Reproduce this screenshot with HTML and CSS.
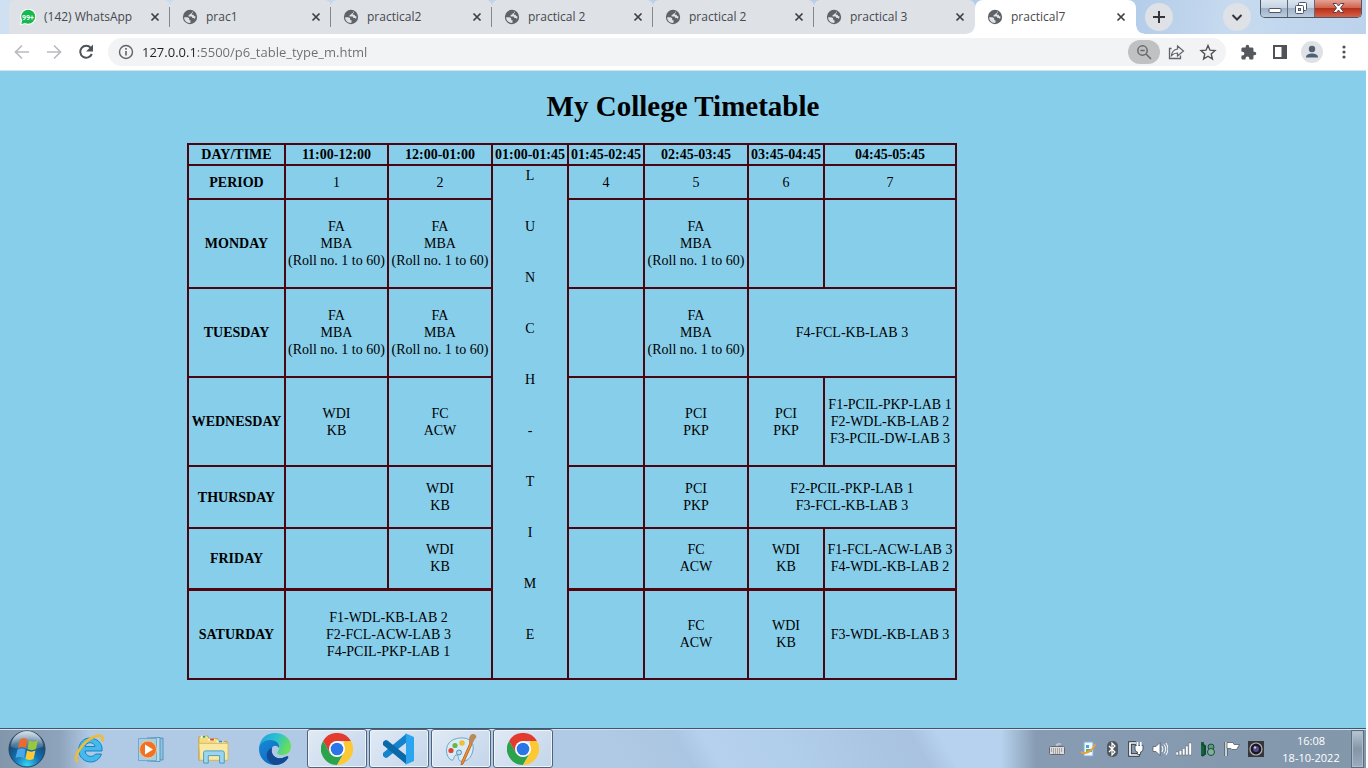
FILE: index.html
```html
<!DOCTYPE html>
<html lang="en">
<head>
<meta charset="utf-8">
<title>practical7</title>
<link rel="stylesheet" href="styles.css">
</head>
<body>
<svg class="defs" aria-hidden="true">
  <symbol id="globe" viewBox="0 0 24 24"><circle cx="12" cy="12" r="10.700" fill="#5f6368"/><path fill="#dfe2e6" d="M3.200 12.500h4.300c2.200 0 3.300 1.200 3.300 2.700 0 1.200.8 1.800 2 1.800v3.800C7.500 21.500 3 17.500 3.200 12.500z"/><path fill="#dfe2e6" d="M13 3.200c1 .1 2 .3 2.800.7-.1 1.900-1 2.700-2.900 2.900-.5 1.500-1.400 2.100-3 2.200v2.200h3.300c1.700 0 2.200 1 2.300 2.300h1.300c1.500 0 2.200.8 2.400 2 .9-1.300 1.200-2.800.9-4.500-1.700 0-2.400-.9-2.600-2.500h-2.600V6.500c1-.3 1.500-1 1.700-2.500z"/></symbol>
  <symbol id="cross" viewBox="0 0 16 16"><path d="M4.500 4.500l7 7M11.500 4.500l-7 7" stroke="#3c4043" stroke-width="1.700"/></symbol>
  <symbol id="chrome" viewBox="0 0 32 32"><path fill="#e33b2e" d="M2.100 8A16 16 0 0 1 29.900 8H16L9 20z"/><path fill="#2ba24c" d="M2.100 8A16 16 0 0 0 16 32l7-12-7 4-7-4z"/><path fill="#fcc934" d="M29.900 8A16 16 0 0 1 16 32l7-12V8z"/><circle cx="16" cy="16" r="8" fill="#fff"/><circle cx="16" cy="16" r="6.300" fill="#2a75e8"/></symbol>
</svg>

<header class="browser">
  <div class="tabstrip">
    <div class="tab"><svg class="favicon" viewBox="0 0 16 16"><path fill="#fff" d="M0 16l1-5A8 8 0 1 1 5 15z"/><circle cx="8.200" cy="7.800" r="7" fill="#17b84f"/><path fill="#17b84f" d="M1.300 15l1-4 3 3z"/><text x="8" y="10.500" class="count">99+</text></svg><button class="title">(142) WhatsApp</button><button class="close" aria-label="Close tab"><svg><use href="#cross"/></svg></button></div>
    <div class="tab"><svg class="favicon"><use href="#globe"/></svg><button class="title">prac1</button><button class="close" aria-label="Close tab"><svg><use href="#cross"/></svg></button></div>
    <div class="tab"><svg class="favicon"><use href="#globe"/></svg><button class="title">practical2</button><button class="close" aria-label="Close tab"><svg><use href="#cross"/></svg></button></div>
    <div class="tab"><svg class="favicon"><use href="#globe"/></svg><button class="title">practical 2</button><button class="close" aria-label="Close tab"><svg><use href="#cross"/></svg></button></div>
    <div class="tab"><svg class="favicon"><use href="#globe"/></svg><button class="title">practical 2</button><button class="close" aria-label="Close tab"><svg><use href="#cross"/></svg></button></div>
    <div class="tab"><svg class="favicon"><use href="#globe"/></svg><button class="title">practical 3</button><button class="close" aria-label="Close tab"><svg><use href="#cross"/></svg></button></div>
    <div class="tab active"><svg class="favicon"><use href="#globe"/></svg><button class="title">practical7</button><button class="close" aria-label="Close tab"><svg><use href="#cross"/></svg></button></div>
    <button class="round" aria-label="New tab"><svg viewBox="0 0 28 28"><path d="M14 8v12M8 14h12" stroke="#333639" stroke-width="2"/></svg></button>
    <button class="round search" aria-label="Search tabs"><svg viewBox="0 0 28 28"><path d="M9.500 12l4.500 4.500 4.500-4.500" fill="none" stroke="#333639" stroke-width="2"/></svg></button>
    <div class="winctl">
      <button class="min" aria-label="Minimize"><svg viewBox="0 0 27 17"><rect x="8" y="8.500" width="12" height="4" rx="1" fill="#fff" stroke="#4d5768"/></svg></button>
      <button class="max" aria-label="Restore"><svg viewBox="0 0 27 17"><rect x="10.500" y="2.500" width="8" height="8" rx="1" fill="#fff" stroke="#4d5768"/><rect x="7.500" y="5.500" width="8" height="8" rx="1" fill="#fff" stroke="#4d5768"/><rect x="10.500" y="8.500" width="2" height="2" fill="#aebdcf" stroke="#4d5768"/></svg></button>
      <button class="quit" aria-label="Close window"><svg viewBox="0 0 46 17"><path d="M18 3.500h3.500l2 2.500 2-2.500H29l-3.500 4.500L29 12.500h-3.500l-2-2.500-2 2.500H18L21.500 8z" fill="#fff" stroke="#5c4248"/></svg></button>
    </div>
  </div>
  <div class="toolbar">
    <button class="tool" aria-label="Back"><svg viewBox="0 0 20 20"><path d="M17 10H4M10 3.500L3.500 10l6.500 6.500" fill="none" stroke="#b9bbbe" stroke-width="1.700"/></svg></button>
    <button class="tool" aria-label="Forward"><svg viewBox="0 0 20 20"><path d="M3 10h13M10 3.500l6.500 6.500-6.500 6.500" fill="none" stroke="#b9bbbe" stroke-width="1.700"/></svg></button>
    <button class="tool" aria-label="Reload"><svg viewBox="0 0 20 20"><path d="M14.800 5.800A6 6 0 1 0 15.800 12" fill="none" stroke="#4f5357" stroke-width="2"/><path d="M17 2.500v7h-7z" fill="#4f5357"/></svg></button>
    <div class="omnibox">
      <svg class="info" viewBox="0 0 16 16"><circle cx="8" cy="8" r="6.500" fill="none" stroke="#5f6368" stroke-width="1.400"/><path d="M8 7v4.500M8 4v1.700" stroke="#5f6368" stroke-width="1.600"/></svg>
      <input class="url" type="text" aria-label="Address" value="127.0.0.1:5500/p6_table_type_m.html">
      <button class="tool pill" aria-label="Zoom"><svg viewBox="0 0 20 20"><circle cx="8.500" cy="8.500" r="4.700" fill="none" stroke="#66696d" stroke-width="1.500"/><path d="M12 12l5 5M6.300 8.500h4.400" stroke="#66696d" stroke-width="1.600"/></svg></button>
      <button class="tool" aria-label="Share"><svg viewBox="0 0 20 20"><path d="M5.500 6.500H3.500v10h11v-3" fill="none" stroke="#5f6368" stroke-width="1.300"/><path d="M11.500 4l6 5-6 5v-3c-3 0-4.500 1-6 2.500.5-4 2.500-6 6-6.500z" fill="none" stroke="#5f6368" stroke-width="1.200"/></svg></button>
      <button class="tool" aria-label="Bookmark"><svg viewBox="0 0 20 20"><path d="M10 3.500l2 4.700 5 .4-3.800 3.300 1.200 5L10 14.200l-4.400 2.700 1.200-5L3 8.600l5-.4z" fill="none" stroke="#4f5357" stroke-width="1.400"/></svg></button>
    </div>
    <button class="tool ext" aria-label="Extensions"><svg viewBox="0 0 24 24"><path fill="#55595e" d="M20.500 11H19V7c0-1.100-.9-2-2-2h-4V3.500a2.500 2.500 0 0 0-5 0V5H4c-1.100 0-2 .9-2 2v3.800h1.500a2.700 2.700 0 0 1 0 5.400H2V20c0 1.100.9 2 2 2h3.800v-1.500a2.700 2.700 0 0 1 5.400 0V22H17c1.100 0 2-.9 2-2v-4h1.500a2.500 2.500 0 0 0 0-5z"/></svg></button>
    <button class="tool" aria-label="Side panel"><svg viewBox="0 0 20 20"><path fill="#4f5357" d="M3 3h14v14H3zM5 5v10h6.500V5z" fill-rule="evenodd"/></svg></button>
    <button class="tool" aria-label="Profile"><svg class="avatar" viewBox="0 0 22 22"><circle cx="11" cy="11" r="11" fill="#dee1e6"/><circle cx="11" cy="8" r="3.200" fill="#4f6073"/><path d="M5 16.500c0-3 3-4 6-4s6 1 6 4z" fill="#4f6073"/></svg></button>
    <button class="tool" aria-label="Menu"><svg viewBox="0 0 20 20"><g fill="#4f5357"><circle cx="10" cy="5" r="1.600"/><circle cx="10" cy="10" r="1.600"/><circle cx="10" cy="15" r="1.600"/></g></svg></button>
  </div>
</header>

<main class="page">
  <h1>My College Timetable</h1>
  <table class="timetable">
    <colgroup><col class="c-day"><col class="c-first"><col class="c-wide"><col class="c-slim"><col class="c-slim"><col class="c-wide"><col class="c-slim"><col class="c-lab"></colgroup>
    <tr><th>DAY/TIME</th><th>11:00-12:00</th><th>12:00-01:00</th><th>01:00-01:45</th><th>01:45-02:45</th><th>02:45-03:45</th><th>03:45-04:45</th><th>04:45-05:45</th></tr>
    <tr class="period"><th>PERIOD</th><td>1</td><td>2</td>
      <td class="lunch" rowspan="7"><div><span>L</span><span>U</span><span>N</span><span>C</span><span>H</span><span>-</span><span>T</span><span>I</span><span>M</span><span>E</span></div></td>
      <td>4</td><td>5</td><td>6</td><td>7</td></tr>
    <tr class="tall"><th>MONDAY</th><td>FA<br>MBA<br>(Roll no. 1 to 60)</td><td>FA<br>MBA<br>(Roll no. 1 to 60)</td><td></td><td>FA<br>MBA<br>(Roll no. 1 to 60)</td><td></td><td></td></tr>
    <tr class="tall"><th>TUESDAY</th><td>FA<br>MBA<br>(Roll no. 1 to 60)</td><td>FA<br>MBA<br>(Roll no. 1 to 60)</td><td></td><td>FA<br>MBA<br>(Roll no. 1 to 60)</td><td colspan="2">F4-FCL-KB-LAB 3</td></tr>
    <tr class="tall"><th>WEDNESDAY</th><td>WDI<br>KB</td><td>FC<br>ACW</td><td></td><td>PCI<br>PKP</td><td>PCI<br>PKP</td><td>F1-PCIL-PKP-LAB 1<br>F2-WDL-KB-LAB 2<br>F3-PCIL-DW-LAB 3</td></tr>
    <tr class="short"><th>THURSDAY</th><td></td><td>WDI<br>KB</td><td></td><td>PCI<br>PKP</td><td colspan="2">F2-PCIL-PKP-LAB 1<br>F3-FCL-KB-LAB 3</td></tr>
    <tr class="short friday"><th>FRIDAY</th><td></td><td>WDI<br>KB</td><td></td><td>FC<br>ACW</td><td>WDI<br>KB</td><td>F1-FCL-ACW-LAB 3<br>F4-WDL-KB-LAB 2</td></tr>
    <tr class="tall last"><th>SATURDAY</th><td colspan="2">F1-WDL-KB-LAB 2<br>F2-FCL-ACW-LAB 3<br>F4-PCIL-PKP-LAB 1</td><td></td><td>FC<br>ACW</td><td>WDI<br>KB</td><td>F3-WDL-KB-LAB 3</td></tr>
  </table>
</main>

<footer class="taskbar">
  <button class="start" aria-label="Start"><svg viewBox="0 0 38 38"><defs><radialGradient id="orb" cx=".5" cy=".95" r=".9"><stop offset="0" stop-color="#35d6f5"/><stop offset=".4" stop-color="#1273b5"/><stop offset=".75" stop-color="#174a78"/><stop offset="1" stop-color="#6c8ba8"/></radialGradient><linearGradient id="shine" x2="0" y2="1"><stop offset="0" stop-color="#e8f2f8" stop-opacity=".8"/><stop offset="1" stop-color="#fff" stop-opacity=".1"/></linearGradient></defs><circle cx="19" cy="19" r="18" fill="url(#orb)" stroke="#26435f"/><path d="M3 17a16 16 0 0 1 32 0c-8 3-24 3-32 0z" fill="url(#shine)"/><path fill="#ee6a2c" d="M12 9.500c3-2 5-1.500 7.500 0L18 18c-3-1.500-5-1.500-8 0z"/><path fill="#98c83c" d="M21 10.500c3 1.500 6 1.500 9-.5l-2 9c-3 1.500-5.500 1.500-8.500 0z"/><path fill="#4aa8e6" d="M9.500 19.500c3-1.500 5-1.500 8 0L16 28c-3-1.500-5.500-1.500-8.500 0z"/><path fill="#fdc934" d="M19 20.500c3 1.500 5.500 1.500 8.500 0l-2 8.500c-3 1.500-5 1-8 0z"/></svg></button>
  <button class="launch" aria-label="Internet Explorer"><svg viewBox="0 0 32 32"><path d="M29 18H12c.5 6 8 7 10.500 3h6C26 29 17 31 11 27 2 21 5 6 16 5c8 0 14 5 13 13zM12 13.500h10c-.5-5-9-5-10 0z" fill="#45b9ec" stroke="#1683c4" stroke-width="1"/><path d="M4.500 29C-1 24 11 7 22 3.500c6-2 9-.5 7 5" fill="none" stroke="#efbd35" stroke-width="2.600"/></svg></button>
  <button class="launch" aria-label="Media Player"><svg viewBox="0 0 32 32"><path d="M14 6l14-1v22l-14-1z" fill="#8fc3df" stroke="#5596bd"/><path d="M12 5l13-.5v24L12 28z" fill="#b8dced" stroke="#5596bd"/><path d="M3.500 5.500h18v22h-18z" fill="#a8cfe5" stroke="#72a9ca"/><circle cx="13" cy="16.500" r="8.500" fill="#ee7324" stroke="#fac28d"/><path d="M10 11.500v10l8-5z" fill="#fff"/></svg></button>
  <button class="launch" aria-label="File Explorer"><svg viewBox="0 0 34 32"><path d="M2 3l9-1 2 3h9l1 3h9v20H2z" fill="#f4dc82" stroke="#c39d42"/><path d="M4 2h6v2H4zM12 5h7v2h-7zM21 7h7v2h-7z" fill="#fff"/><path d="M6 2h3v2H6z" fill="#30ab43"/><path d="M14 5h4v2h-4z" fill="#d34a35"/><path d="M23 7h4v2h-4z" fill="#3c8ed0"/><path d="M2 10h31v18H3z" fill="#f9e9a3" stroke="#d7b75b"/><path d="M7 31V20q0-2 2-2h18q2 0 2 2v11h-5v-8H12v8z" fill="#9cd6ee" stroke="#469bc5"/></svg></button>
  <button class="launch" aria-label="Edge"><svg viewBox="0 0 32 32"><defs><linearGradient id="ea" x2="1" y2=".4"><stop offset="0" stop-color="#1b9de2"/><stop offset=".55" stop-color="#2bc2ce"/><stop offset="1" stop-color="#67de5c"/></linearGradient><linearGradient id="eb" x2="1" y2="1"><stop offset="0" stop-color="#1688d8"/><stop offset="1" stop-color="#1260b4"/></linearGradient></defs><path d="M0 15C1 5 8 0 16 0c9 0 16 6 16 13 0 6-4 9-9 9-4 0-6-2-4-4 4-5-1-9-6-9C7 9 2 12 0 15z" fill="url(#ea)"/><path d="M0 16c0-5 5-9 11-9 6 0 10 4 9 8-2-3-6-3-7 0-2 7 5 13 13 9 2-1 4-1 3 1-3 5-8 7-13 7C7 32 0 25 0 16z" fill="url(#eb)"/><path d="M13 15c-2 7 5 13 13 9 2-1 4-1 3 1-3 5-8 7-13 7C5 29 6 17 13 15z" fill="#124b94"/></svg></button>
  <div class="running">
    <button class="app" aria-label="Chrome"><svg><use href="#chrome"/></svg></button>
    <button class="app" aria-label="Visual Studio Code"><svg viewBox="0 0 32 32"><path d="M23 1L0 20v3l2.500 2 2-.5L24 9z" fill="#1684cc"/><path d="M23 31L0 12V9l2.500-2 2 .5L24 23z" fill="#0969a9"/><path d="M23 .5L31 4v24l-8 3.500c-1 0-1-1 0-2V2.500c-1-1-1-2 0-2z" fill="#2ba5f0"/></svg></button>
    <button class="app" aria-label="Paint"><svg viewBox="0 0 32 32"><path d="M6 27C-1 22 0 9 10 6c9-3 20 0 18 11-2 12-12 13-14 10-1-2 0-5-3-5-3 1-1 6-5 5z" fill="#d9ebf6" stroke="#6aa6c8"/><circle cx="6" cy="17.500" r="2.600" fill="#df4332"/><circle cx="10" cy="12.500" r="2.600" fill="#65b843"/><circle cx="17" cy="10" r="2.800" fill="#f0bd37"/><circle cx="14" cy="19.500" r="2.500" fill="#b6dbed" stroke="#4d91be"/><path d="M25 10l2 1-9 20-2 1 1-4z" fill="#ee923b" stroke="#bd6a27"/><path d="M24 10c0-5 0-7 3-9 4 0 5 2 4 4-2 1-2 4-4 6z" fill="#b88c59"/></svg></button>
    <button class="app" aria-label="Chrome window"><svg><use href="#chrome"/></svg></button>
  </div>
  <div class="tray">
    <svg class="keys" viewBox="0 0 16 16"><path d="M8 5V3h4" fill="none" stroke="#e4e4e4"/><rect x=".5" y="5.500" width="15" height="8" rx="1" fill="#ddd" stroke="#68686c"/><path d="M2 8h12M2 10h12M4 12h8" stroke="#68686c" stroke-dasharray="1 1"/></svg>
    <svg viewBox="0 0 16 16"><path d="M4 1h9v14H4z" fill="#eef7fd" stroke="#7ab1df"/><path d="M6 4h3v3H6zM9 8h3v3H9z" fill="#4da3e2"/><path d="M6 8h3v3H6z" fill="#71b748"/><path d="M1 11c4 3 12-1 14-8" fill="none" stroke="#e9a13b" stroke-width="2"/></svg>
    <svg viewBox="0 0 16 16"><rect x="3" y="0" width="11" height="16" rx="5" fill="#51575e"/><path d="M5 5l6 6-3 3V2l3 3-6 6" fill="none" stroke="#fff" stroke-width="1.200"/></svg>
    <svg viewBox="0 0 16 16"><path d="M8 2H2v12h8v-2" fill="none" stroke="#30383f" stroke-width="3.500"/><path d="M8 2H2v12h8v-2" fill="none" stroke="#fff" stroke-width="1.700"/><path d="M7 4.500h8V8q0 3-2.500 3v2.500h-3V11Q7 11 7 8z" fill="#fff" stroke="#38414a" stroke-width=".8"/><path d="M9.500 1v4M12.800 1v4" stroke="#fff" stroke-width="1.600"/></svg>
    <svg viewBox="0 0 16 16"><path d="M1 5.500h3l4-4v13l-4-4H1z" fill="#fff" stroke="#46525e" stroke-width=".7"/><path d="M10 5q2 3 0 6M12 3.500q3.500 4.500 0 9M14 2q4 6 0 12" fill="none" stroke="#fff"/></svg>
    <svg viewBox="0 0 16 16"><path d="M0 11h2.500v3H0zM3.200 9.500h2.500V14H3.200zM6.400 7.500h2.500V14H6.400zM9.600 5h2.500v9H9.600zM12.800 2h2.700v12h-2.700z" fill="#fff" stroke="#46525e" stroke-width=".4"/></svg>
    <svg viewBox="0 0 16 16"><path d="M1 1h3v14H1z" fill="#12633f"/><path d="M2 3l3 2v8l-3 2" fill="none" stroke="#174832" stroke-width="2"/><circle cx="11" cy="6" r="3" fill="#5b9b80" stroke="#194e39"/><circle cx="11" cy="11" r="3.500" fill="#80b29b" stroke="#194e39"/></svg>
    <svg viewBox="0 0 16 16"><path d="M2 1v14" stroke="#38444e" stroke-width="3"/><path d="M2 1v14" stroke="#fff" stroke-width="1.500"/><path d="M3 1.500h6l1 2h5.500l-3 5H8l-1-1H3z" fill="#fff" stroke="#46525e" stroke-width=".7"/></svg>
    <svg viewBox="0 0 16 16"><path d="M0 0h16v16H0z" fill="#39363b"/><circle cx="8" cy="8" r="6" fill="#171824" stroke="#b4b2b6" stroke-width="1.200"/><circle cx="8" cy="8" r="3" fill="#564c83"/><circle cx="7" cy="6.500" r="1.200" fill="#bec3eb"/></svg>
  </div>
  <div class="clock"><span>16:08</span><span>18-10-2022</span></div>
  <button class="desktop" aria-label="Show desktop"></button>
</footer>
</body>
</html>
```
FILE: styles.css
```css
* { box-sizing: border-box; }
body {
  margin: 0;
  padding-right: 2px;
  min-height: 100vh;
  display: flex;
  flex-direction: column;
  background: #fff;
  font-family: "Open Sans", "Noto Sans", sans-serif;
}
button { border: 0; padding: 0; background: none; font: inherit; color: inherit; }
svg { display: block; }
.defs { position: absolute; width: 0; height: 0; }

.tabstrip {
  display: flex;
  align-items: center;
  height: 34px;
  padding: 0 4px 0 9px;
  background: linear-gradient(100deg, #cfe0f3, #b8cfea 50%, #b1cbe8 82%, #c7daef 90%, #bcd3ec);
}
.tab {
  position: relative;
  flex: 0 1 161px;
  min-width: 0;
  height: 34px;
  display: flex;
  align-items: center;
  padding: 0 7px 0 12px;
  background: #dee1e6;
  border-radius: 6px 6px 0 0;
}
.tab:first-child { padding-left: 11px; }
.tab:not(.active)::after {
  content: "";
  position: absolute;
  right: 0;
  top: 7px;
  width: 1px;
  height: 20px;
  background: #85898e;
}
.tab:nth-child(6)::after { display: none; }
.tab.active { background: #fff; border-radius: 8px 8px 0 0; }
.tab.active::before, .tab.active::after {
  content: "";
  position: absolute;
  bottom: 0;
  width: 8px;
  height: 8px;
}
.tab.active::before { left: -8px; background: radial-gradient(circle at 0 0, transparent 7px, #fff 8px); }
.tab.active::after { right: -8px; background: radial-gradient(circle at 100% 0, transparent 7px, #fff 8px); }
.favicon { width: 16px; height: 16px; flex: none; }
.count { font: bold 7px "Roboto", sans-serif; fill: #fff; text-anchor: middle; }
.title {
  flex: 1;
  min-width: 0;
  margin-left: 8px;
  overflow: hidden;
  white-space: nowrap;
  text-align: left;
  font-size: 12px;
  line-height: 16px;
  color: #45494d;
}
.close, .close svg { width: 16px; height: 16px; flex: none; }
.round { flex: none; width: 28px; height: 28px; margin-left: 9px; border-radius: 14px; background: #dee1e6; }
.search { margin-left: auto; }
.winctl {
  align-self: flex-start;
  display: flex;
  height: 18px;
  margin-left: 9px;
  border: 1px solid #4b5667;
  border-top: 0;
  border-radius: 0 0 5px 5px;
  overflow: hidden;
}
.winctl button { height: 17px; background: linear-gradient(#dce6f0, #c5d3e3 45%, #9fb2c8 50%, #bccce0); }
.winctl svg { height: 17px; }
.winctl .min, .winctl .max { width: 27px; border-right: 1px solid #5f6b7c; }
.winctl .quit { width: 46px; background: linear-gradient(#e5a193, #cf6650 45%, #b6301a 50%, #d8614a); }

.toolbar {
  display: flex;
  align-items: center;
  height: 37px;
  padding: 0 6px;
  border-bottom: 1px solid #d5e3ea;
  background: #fff;
}
.tool { flex: none; width: 32px; height: 24px; display: grid; place-items: center; }
.tool svg { width: 20px; height: 20px; }
.tool .avatar { width: 22px; height: 22px; }
.ext { margin-left: 6px; }
.ext svg { width: 17px; height: 17px; }
.omnibox {
  flex: 1;
  min-width: 0;
  display: flex;
  align-items: center;
  height: 28px;
  margin-left: 6px;
  padding: 0 2px 0 10px;
  border-radius: 14px;
  background: #f1f3f4;
}
.info { width: 16px; height: 16px; flex: none; }
.url {
  flex: 1;
  min-width: 0;
  margin-left: 8px;
  padding: 0;
  border: 0;
  outline: 0;
  font: 13px/20px "Open Sans", "Noto Sans", sans-serif;
  color: transparent;
  background: linear-gradient(90deg, #202124 54px, #6a6e72 54px);
  background-clip: text;
  -webkit-background-clip: text;
}
.pill { border-radius: 12px; background: #c0c1c2; }

.page {
  display: flow-root;
  flex: 1;
  background: #87ceeb;
  font-family: "Liberation Serif", serif;
  color: #000;
}
h1 { margin: 19px 0 20px; font-size: 29px; line-height: 33px; text-align: center; }
.timetable {
  width: 769px;
  margin-left: 187px;
  table-layout: fixed;
  border-collapse: collapse;
  border: 2px solid #4a0610;
  font-size: 14px;
  line-height: 17px;
  text-align: center;
}
.c-day { width: 97px; }
.c-first { width: 103px; }
.c-wide { width: 104px; }
.c-slim { width: 76px; }
.c-lab { width: 132px; }
.timetable th, .timetable td { padding: 1px 0; border: 2px solid #4a0610; white-space: nowrap; }
.timetable tr { height: 21px; }
.timetable .period { height: 34px; }
.timetable .tall { height: 89px; }
.timetable .short { height: 62px; }
.timetable .friday { height: 61px; }
.timetable .last { height: 90px; }
.timetable .last > * { border-top: 3px solid #52050d; }
.timetable .lunch { vertical-align: top; }
.lunch div { display: flex; flex-direction: column; gap: 34px; }

.taskbar {
  display: flex;
  align-items: center;
  height: 40px;
  padding: 0 2px 0 8px;
  border-top: 1px solid #40566a;
  box-shadow: inset 0 1px #d3e2f1;
  background:
    linear-gradient(90deg, #8296ab 0, #8ea4bc 60px, transparent 90px),
    linear-gradient(270deg, #8397ab 0, #879cb3 330px, transparent 365px),
    linear-gradient(60deg, #b0c9e4 0 45%, #abc6e2 50%, #b5d1ed 52%, #b0cde9 58%, #a8c2df 67%, #b7d2ee 69% 75%, #abc5e1 77%);
}
.start, .start svg { width: 38px; height: 38px; }
.launch { width: 62px; display: grid; place-items: center; }
.launch svg { width: 32px; height: 32px; }
.start + .launch { margin-left: 12px; }
.running { display: flex; gap: 2px; margin-left: 1px; }
.app {
  width: 60px;
  height: 39px;
  display: grid;
  place-items: center;
  border: 1px solid #526377;
  border-radius: 3px;
  box-shadow: inset 0 0 0 1px #edf4fb;
  background: linear-gradient(135deg, #e1eaf5, #c3d5ea);
}
.app svg { width: 32px; height: 32px; }
.tray { display: flex; align-items: center; gap: 8px; margin-left: auto; }
.tray svg { width: 16px; height: 16px; }
.tray .keys { margin-right: 7px; }
.clock {
  display: flex;
  flex-direction: column;
  width: 80px;
  margin-left: 7px;
  text-align: center;
  font-size: 11px;
  line-height: 17px;
  color: #fff;
}
.desktop {
  width: 13px;
  height: 38px;
  border: 1px solid #5c6d7f;
  box-shadow: inset 0 0 0 1px #aebccb;
  background: linear-gradient(#b8c6d4, #8495a8 50%, #9cacbd);
}
```
